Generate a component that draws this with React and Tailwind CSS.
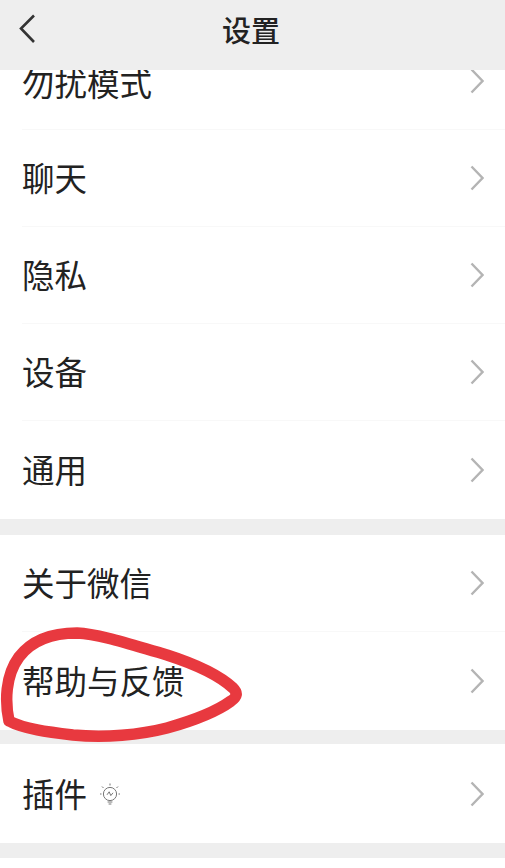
const Chevron = () => (
  <svg width="14" height="26" viewBox="0 0 14 26" fill="none" className="shrink-0">
    <path d="M1.5 1.5 L12.5 13 L1.5 24.5" stroke="#b4b4b4" strokeWidth="2.4" />
  </svg>
);

// lightbulb next to the plugin row
const Bulb = () => (
  <svg width="22" height="24" viewBox="0 0 22 24" fill="none" stroke="#777" strokeWidth="1">
    <circle cx="11" cy="12" r="6.6" />
    <path d="M8 12.8 L10.2 9.8 L11.8 13.6 L14 10.8" />
    <path d="M8.6 20 H13.4 M9.6 22 H12.4" />
    <path d="M11 1.5 V3.5 M3 4.5 L4.5 6 M19 4.5 L17.5 6 M1 12 H2.5 M19.5 12 H21" />
  </svg>
);

const Row = ({ label, divider, extra, height = "h-[97px]" }) => (
  <div className={`${height} bg-white pl-[22px] overflow-hidden`}>
    <div className={`h-full flex items-center justify-between pr-[21px] ${divider ? "border-b border-[#f8f8f8]" : ""}`}>
      <div className="flex items-center gap-[12px]">
        <span className="text-[32.5px] leading-[40px] text-[#222222] -mt-[2px]">{label}</span>
        {extra}
      </div>
      <Chevron />
    </div>
  </div>
);

const Band = ({ height }) => <div className={`${height} bg-[#eeeeee]`} />;

export default function App() {
  return (
    <div className="relative w-[505px] h-[868px] overflow-hidden bg-white font-['Noto_Sans_CJK_SC','Noto_Sans',sans-serif]">
      <header className="h-[70px] bg-[#eeeeee] flex items-center justify-center relative z-10">
        <svg width="20" height="32" viewBox="0 0 20 32" fill="none" className="absolute left-[18px] top-[13px]">
          <path d="M16 2.5 L3 15.5 L16 29" stroke="#333333" strokeWidth="2.6" />
        </svg>
        <h1 className="text-[29px] leading-[36px] font-medium text-[#222222] -mt-[12px] -ml-[3px]">设置</h1>
      </header>

      <div className="h-[60px] bg-white pl-[22px] overflow-hidden">
        <div className="h-full flex justify-between pr-[21px] border-b border-[#f8f8f8]">
          <span className="text-[32.5px] leading-[40px] text-[#222222] -mt-[8px]">勿扰模式</span>
          <div className="-mt-[2px]"><Chevron /></div>
        </div>
      </div>
      <Row label="聊天" divider />
      <Row label="隐私" divider />
      <Row label="设备" divider />
      <Row label="通用" height="h-[98px]" />
      <Band height="h-[16px]" />
      <Row label="关于微信" divider />
      <Row label="帮助与反馈" height="h-[98px]" />
      <Band height="h-[14px]" />
      <Row label="插件" height="h-[99px]" extra={<Bulb />} />
      <Band height="h-[15px]" />

      {/* hand drawn red circle on top of the screenshot */}
      <svg width="260" height="140" viewBox="0 0 260 140" fill="none" className="absolute left-0 top-[610px] z-20">
        <path
          d="M9 111 C5 92 5 66 19 47 C32 30 52 23 77 23 C100 24 132 35 167 45 C195 54 220 66 233 78 C238 83 237 87 231 91 C216 102 192 111 167 118 C140 125 105 128 73 125 C48 122 24 119 9 111"
          stroke="#e8393f"
          strokeWidth="11.5"
          strokeLinecap="round"
          strokeLinejoin="round"
        />
      </svg>
    </div>
  );
}
